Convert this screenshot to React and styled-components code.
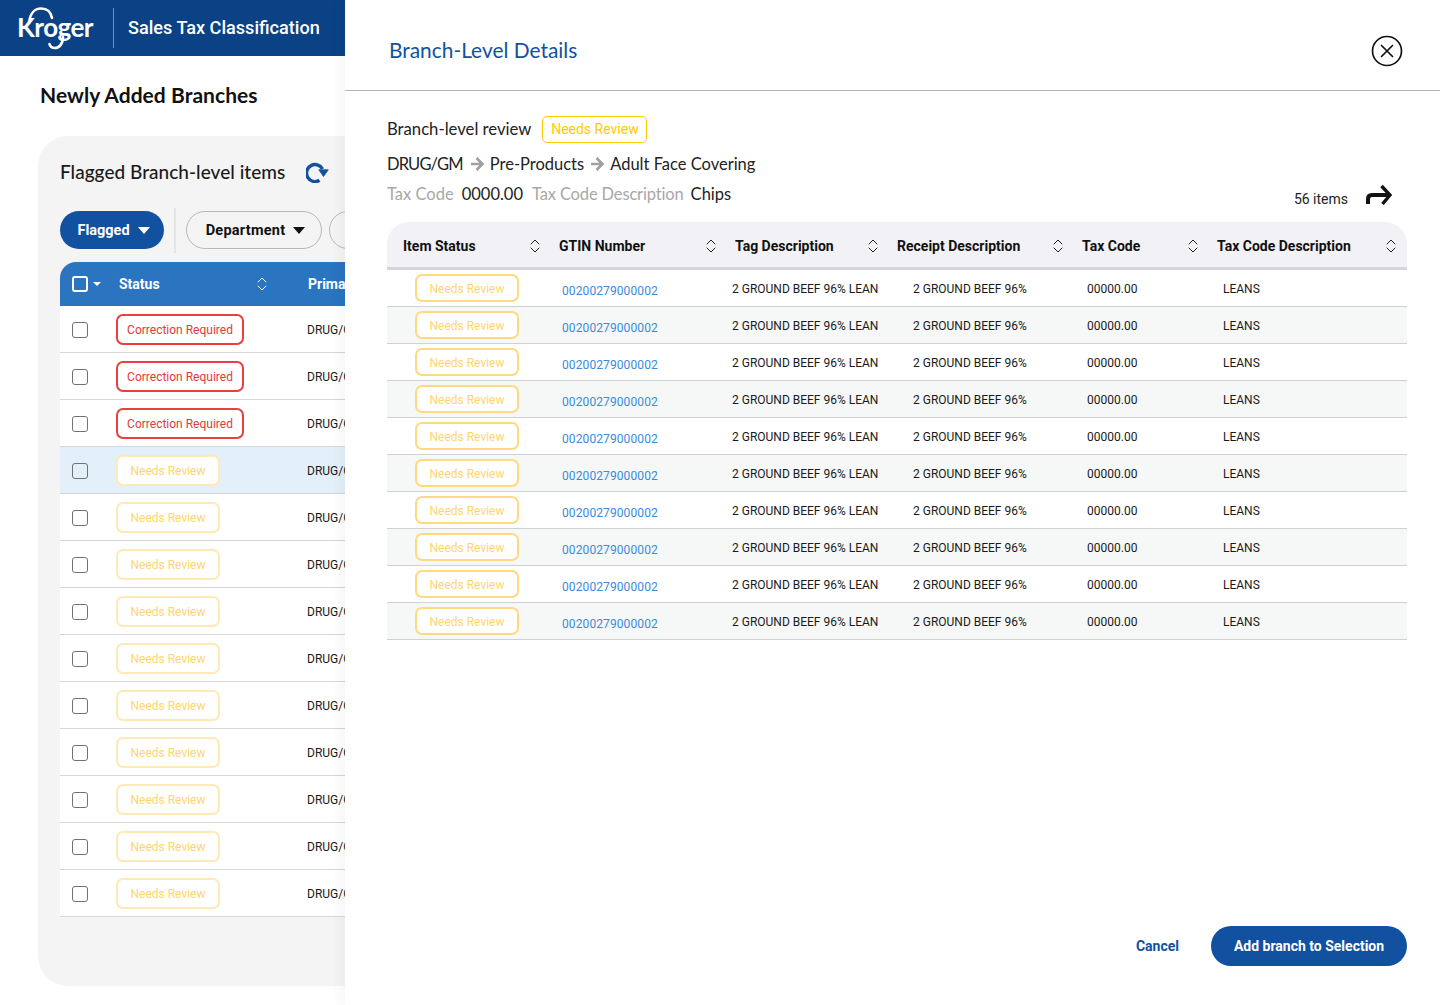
import React from "react";
import styled, { createGlobalStyle } from "styled-components";

const Global = createGlobalStyle`
  html, body { margin: 0; padding: 0; background: #fff; }
  body { font-family: Roboto, "Liberation Sans", sans-serif; color: #111; }
  * { box-sizing: border-box; }
`;

const Page = styled.div`
  width: 1440px;
  height: 1005px;
  display: flex;
  overflow: hidden;
  background: #fff;
`;

const LeftPane = styled.div`
  width: 345px;
  flex: none;
  overflow: hidden;
  display: flex;
  flex-direction: column;
`;

const AppBar = styled.header`
  height: 56px;
  flex: none;
  background: #0a4285;
  display: flex;
  align-items: center;
  padding-left: 17px;
`;

const Logo = styled.div`
  position: relative;
  width: 79px;
  height: 56px;
  color: #fff;
  font-family: Lato, sans-serif;
  font-weight: 700;
  font-size: 26px;
  letter-spacing: -0.5px;
  line-height: 55px;
  svg { position: absolute; left: -17px; top: 0; }
`;

const BarDivider = styled.div`
  width: 1px;
  height: 40px;
  margin: 0 14px 0 17px;
  background: #6f93c0;
`;

const AppTitle = styled.div`
  color: #fff;
  font-weight: 500;
  font-size: 18.1px;
  white-space: nowrap;
  padding-bottom: 2px;
`;

const PageTitle = styled.h1`
  margin: 26px 0 28px 40px;
  font-family: Lato, sans-serif;
  font-weight: 700;
  font-size: 21px;
  letter-spacing: 0.05px;
  line-height: 26px;
  white-space: nowrap;
  color: #111;
`;

const Card = styled.section`
  width: 1000px;
  height: 850px;
  margin-left: 38px;
  background: #f4f4f4;
  border-radius: 30px;
  padding: 21px 0 0 22px;
  flex: none;
`;

const CardTitleRow = styled.div`
  display: flex;
  align-items: center;
  gap: 21px;
  height: 28px;
  margin-bottom: 26px;
`;

const CardTitle = styled.h2`
  margin: 0;
  font-family: Lato, sans-serif;
  font-weight: 500;
  font-size: 19px;
  letter-spacing: 0.03px;
  white-space: nowrap;
  color: #1a1a1a;
`;

const FilterRow = styled.div`
  display: flex;
  align-items: center;
  height: 38px;
  margin-bottom: 13px;
`;

const Pill = styled.div`
  height: 38px;
  display: flex;
  align-items: center;
  justify-content: center;
  gap: 8px;
  flex: none;
  width: ${(p) => p.$w}px;
  margin-right: ${(p) => p.$mr || 0}px;
  padding-left: 3px;
  border-radius: 19px;
  font-size: 14.5px;
  letter-spacing: ${(p) => (p.$active ? "0" : "0.25px")};
  font-weight: 700;
  background: ${(p) => (p.$active ? "#11519f" : "transparent")};
  color: ${(p) => (p.$active ? "#fff" : "#111")};
  border: ${(p) => (p.$active ? "none" : "1px solid #b9b9b9")};
`;

const FilterDivider = styled.div`
  width: 2px;
  height: 45px;
  margin: 0 10px;
  background: #e4e4e4;
  flex: none;
`;

const Caret = styled.span`
  width: 0;
  height: 0;
  border-left: 6px solid transparent;
  border-right: 6px solid transparent;
  border-top: 7px solid ${(p) => p.$color};
`;

const LeftHead = styled.div`
  width: 900px;
  height: 44px;
  background: #2a74c0;
  border-radius: 16px 0 0 0;
  display: flex;
  align-items: center;
  padding-left: 12px;
  color: #fff;
  font-size: 14px;
  font-weight: 700;
`;

const HeadBox = styled.span`
  width: 16px;
  height: 16px;
  border: 2px solid #fff;
  border-radius: 3px;
  flex: none;
`;

const SmallCaret = styled.span`
  width: 0;
  height: 0;
  margin: 0 18px 0 5px;
  border-left: 4px solid transparent;
  border-right: 4px solid transparent;
  border-top: 4px solid #fff;
  flex: none;
`;

const HeadStatus = styled.div`
  width: 189px;
  display: flex;
  align-items: center;
  justify-content: space-between;
  padding-right: 41px;
  flex: none;
`;

const LeftRow = styled.div`
  width: 900px;
  height: 47px;
  padding: 1px 0 0 12px;
  background: ${(p) => (p.$selected ? "#e3f0fa" : "#fff")};
  border-bottom: 1px solid #d5d8da;
  display: flex;
  align-items: center;
`;

const RowBox = styled.span`
  width: 16px;
  height: 16px;
  border: 1.5px solid #6f7376;
  border-radius: 3px;
  background: transparent;
  margin-right: 28px;
  flex: none;
`;

const LeftStatus = styled.div`
  width: 191px;
  flex: none;
  display: flex;
`;

const Badge = styled.span`
  display: inline-flex;
  align-items: center;
  justify-content: center;
  border-radius: 7px;
  font-size: 12px;
  white-space: nowrap;
  background: #fff;
  width: ${(p) => p.$w}px;
  height: ${(p) => p.$h}px;
  padding-top: ${(p) => p.$pt || 0}px;
  border: 2px solid ${(p) => p.$border};
  color: ${(p) => p.$color};
`;

const Cell = styled.span`
  font-size: 12px;
  color: #1a1a1a;
  white-space: nowrap;
`;

const Drawer = styled.aside`
  flex: 1;
  min-width: 0;
  display: flex;
  flex-direction: column;
  background: #fff;
  box-shadow: -6px 0 10px rgba(0, 0, 0, 0.035);
  position: relative;
`;

const DrawerHead = styled.div`
  height: 91px;
  flex: none;
  border-bottom: 1px solid #b4b6b8;
  display: flex;
  align-items: center;
  justify-content: space-between;
  padding: 22px 37px 10px 44px;
`;

const DrawerTitle = styled.h2`
  margin: 0 0 4px;
  font-family: Lato, sans-serif;
  font-weight: 400;
  font-size: 20.9px;
  color: #11519f;
`;

const DrawerBody = styled.div`
  flex: 1;
  padding: 23px 33px 39px 42px;
  display: flex;
  flex-direction: column;
`;

const InfoRow = styled.div`
  display: flex;
  align-items: center;
  font-family: Lato, sans-serif;
  font-size: 16.5px;
  height: 28px;
  margin-bottom: ${(p) => p.$mb || 0}px;
  color: #222;
  white-space: nowrap;
`;

const ReviewLabel = styled.span`
  font-size: 16.7px;
  padding-top: 2px;
`;

const TopBadge = styled.span`
  margin: 2px 0 0 11px;
  height: 27px;
  width: 105px;
  display: inline-flex;
  align-items: center;
  justify-content: center;
  border: 1px solid #ffcb05;
  border-radius: 5px;
  color: #ffcb05;
  font-family: Roboto, sans-serif;
  font-size: 14px;
`;

const Muted = styled.span`
  color: #a8a8a8;
  margin-right: ${(p) => p.$mr}px;
  letter-spacing: ${(p) => (p.$tight ? "-0.15px" : "0")};
`;

const Plain = styled.span`
  margin: 0 ${(p) => p.$mr || 0}px 0 ${(p) => p.$ml || 0}px;
`;

const DeptCrumb = styled.span`
  margin-right: 6px;
  letter-spacing: -0.85px;
`;

const TaxLine = styled.div`
  display: flex;
  align-items: flex-end;
  justify-content: space-between;
  height: 28px;
  margin-bottom: 14px;
`;

const ItemsCount = styled.div`
  display: flex;
  align-items: center;
  gap: 17px;
  padding-right: 15px;
  font-size: 14px;
  color: #222;
  height: 24px;
  margin-bottom: -3px;
`;

const TableHead = styled.div`
  height: 48px;
  padding-top: 2px;
  display: grid;
  grid-template-columns: 172px 176px 162px 185px 135px 190px;
  background: #f1f1f6;
  border-radius: 22px 22px 0 0;
  border-bottom: 3px solid #d2d5d9;
`;

const HeadCell = styled.div`
  display: flex;
  align-items: center;
  justify-content: space-between;
  padding: 0 ${(p) => (p.$last ? 11 : 19)}px 0 ${(p) => (p.$first ? 16 : 0)}px;
  font-size: 14px;
  font-weight: 700;
  color: #111;
  white-space: nowrap;
`;

const TableRow = styled.div`
  height: 37px;
  display: grid;
  align-items: center;
  grid-template-columns: 175px 170px 181px 174px 136px 184px;
  background: ${(p) => (p.$alt ? "#f6f8f8" : "#fff")};
  border-bottom: 1px solid #ced2d4;
  font-size: 12px;
  color: #1a1a1a;
`;

const TextCell = styled.span`
  padding-top: 2px;
`;

const BadgeCell = styled.div`
  padding-left: 28px;
  display: flex;
`;

const GtinLink = styled.span`
  color: #3a8bdc;
  padding-top: 5px;
  font-size: 12px;
  letter-spacing: 0.1px;
`;

const Spacer = styled.div`
  flex: 1;
`;

const Actions = styled.div`
  display: flex;
  align-items: center;
  justify-content: flex-end;
  gap: 32px;
`;

const CancelButton = styled.button`
  border: 0;
  background: none;
  padding: 0;
  color: #11519f;
  font: 700 14px Roboto, sans-serif;
`;

const PrimaryButton = styled.button`
  border: 0;
  width: 196px;
  height: 40px;
  border-radius: 20px;
  background: #11519f;
  color: #fff;
  font: 700 14px Roboto, sans-serif;
`;

const SortIcon = ({ color = "#222" }) => (
  <svg width="10" height="14" viewBox="0 0 10 14" fill="none" stroke={color} strokeWidth="1" style={{ flex: "none" }}>
    <path d="M1 5 5 1l4 4M1 9l4 4 4-4" strokeLinecap="round" strokeLinejoin="round" />
  </svg>
);

const Swoosh = () => (
  <svg width="100" height="56" viewBox="0 0 100 56" fill="none" stroke="#fff" strokeWidth="2.6" strokeLinecap="round">
    <path d="M29 23C30 13 35 8.500 41 8.500C47 8.500 51 12 52 18" />
    <path d="M63 37C63 44 59 48 55 48C52 48 50 46.500 49.500 44" />
  </svg>
);

const RefreshIcon = () => (
  <svg width="23" height="22" viewBox="0 0 23 22" fill="none" style={{ flex: "none", marginTop: 2 }}>
    <path d="M13.500 19.300A8.500 8.500 0 1 1 16.500 8" stroke="#11519f" strokeWidth="3.400" />
    <path d="M12.800 8.800H22.300L17.500 15.500Z" fill="#11519f" stroke="#11519f" strokeWidth="0.8" strokeLinejoin="round" />
  </svg>
);

const CloseIcon = () => (
  <svg width="32" height="32" viewBox="0 0 32 32" fill="none" stroke="#111" strokeWidth="1.700">
    <circle cx="16" cy="16" r="14.500" />
    <path d="M10.500 10.500 21.500 21.500M21.500 10.500 10.500 21.500" strokeLinecap="round" />
  </svg>
);

const TurnIcon = () => (
  <svg width="27" height="22" viewBox="0 0 27 22" fill="none" stroke="#111" style={{ marginTop: -9 }}>
    <path d="M3 20V15C3 12.500 4.500 11 7 11H24" strokeWidth="4" />
    <path d="M16.500 2 25 11 17.500 20" strokeWidth="3.400" />
  </svg>
);

const CrumbArrow = () => (
  <svg width="16" height="16" viewBox="0 0 16 16" fill="none" stroke="#a0a0a0" strokeWidth="2.600" style={{ flex: "none" }}>
    <path d="M2 8h11.500M7.500 2 13.500 8l-6 6" />
  </svg>
);

const leftRows = [
  ...Array(3).fill("correction"),
  ...Array(10).fill("review"),
];

const columns = ["Item Status", "GTIN Number", "Tag Description", "Receipt Description", "Tax Code", "Tax Code Description"];

export default function App() {
  return (
    <Page>
      <Global />
      <LeftPane>
        <AppBar>
          <Logo>
            Kroger
            <Swoosh />
          </Logo>
          <BarDivider />
          <AppTitle>Sales Tax Classification</AppTitle>
        </AppBar>
        <PageTitle>Newly Added Branches</PageTitle>
        <Card>
          <CardTitleRow>
            <CardTitle>Flagged Branch-level items</CardTitle>
            <RefreshIcon />
          </CardTitleRow>
          <FilterRow>
            <Pill $active $w={104}>
              Flagged <Caret $color="#fff" />
            </Pill>
            <FilterDivider />
            <Pill $w={136} $mr={7}>
              Department <Caret $color="#111" />
            </Pill>
            <Pill $w={120}>Category</Pill>
          </FilterRow>
          <LeftHead>
            <HeadBox />
            <SmallCaret />
            <HeadStatus>
              Status <SortIcon color="#fff" />
            </HeadStatus>
            Primary
          </LeftHead>
          {leftRows.map((kind, i) => (
            <LeftRow key={i} $selected={i === 3}>
              <RowBox />
              <LeftStatus>
                {kind === "correction" ? (
                  <Badge $w={128} $h={31} $border="#e8403f" $color="#e23a3a">
                    Correction Required
                  </Badge>
                ) : (
                  <Badge $w={104} $h={31} $border="#ffe9b4" $color="#ffd56e">
                    Needs Review
                  </Badge>
                )}
              </LeftStatus>
              <Cell>DRUG/GM</Cell>
            </LeftRow>
          ))}
        </Card>
      </LeftPane>
      <Drawer>
        <DrawerHead>
          <DrawerTitle>Branch-Level Details</DrawerTitle>
          <CloseIcon />
        </DrawerHead>
        <DrawerBody>
          <InfoRow $mb={8}>
            <ReviewLabel>Branch-level review</ReviewLabel>
            <TopBadge>Needs Review</TopBadge>
          </InfoRow>
          <InfoRow $mb={2}>
            <DeptCrumb>DRUG/GM</DeptCrumb>
            <CrumbArrow />
            <Plain $ml={5} $mr={5}>Pre-Products</Plain>
            <CrumbArrow />
            <Plain $ml={5}>Adult Face Covering</Plain>
          </InfoRow>
          <TaxLine>
            <InfoRow>
              <Muted $mr={8}>Tax Code</Muted>
              <Plain $mr={9}>0000.00</Plain>
              <Muted $mr={7} $tight>Tax Code Description</Muted>
              <Plain>Chips</Plain>
            </InfoRow>
            <ItemsCount>
              56 items <TurnIcon />
            </ItemsCount>
          </TaxLine>
          <TableHead>
            {columns.map((c, i) => (
              <HeadCell key={c} $first={i === 0} $last={i === 5}>
                {c} <SortIcon />
              </HeadCell>
            ))}
          </TableHead>
          {Array.from({ length: 10 }).map((_, i) => (
            <TableRow key={i} $alt={i % 2 === 1}>
              <BadgeCell>
                <Badge $w={104} $h={28} $pt={1} $border="#ffd980" $color="#ffd56e">
                  Needs Review
                </Badge>
              </BadgeCell>
              <GtinLink>00200279000002</GtinLink>
              <TextCell>2 GROUND BEEF 96% LEAN</TextCell>
              <TextCell>2 GROUND BEEF 96%</TextCell>
              <TextCell>00000.00</TextCell>
              <TextCell>LEANS</TextCell>
            </TableRow>
          ))}
          <Spacer />
          <Actions>
            <CancelButton>Cancel</CancelButton>
            <PrimaryButton>Add branch to Selection</PrimaryButton>
          </Actions>
        </DrawerBody>
      </Drawer>
    </Page>
  );
}
